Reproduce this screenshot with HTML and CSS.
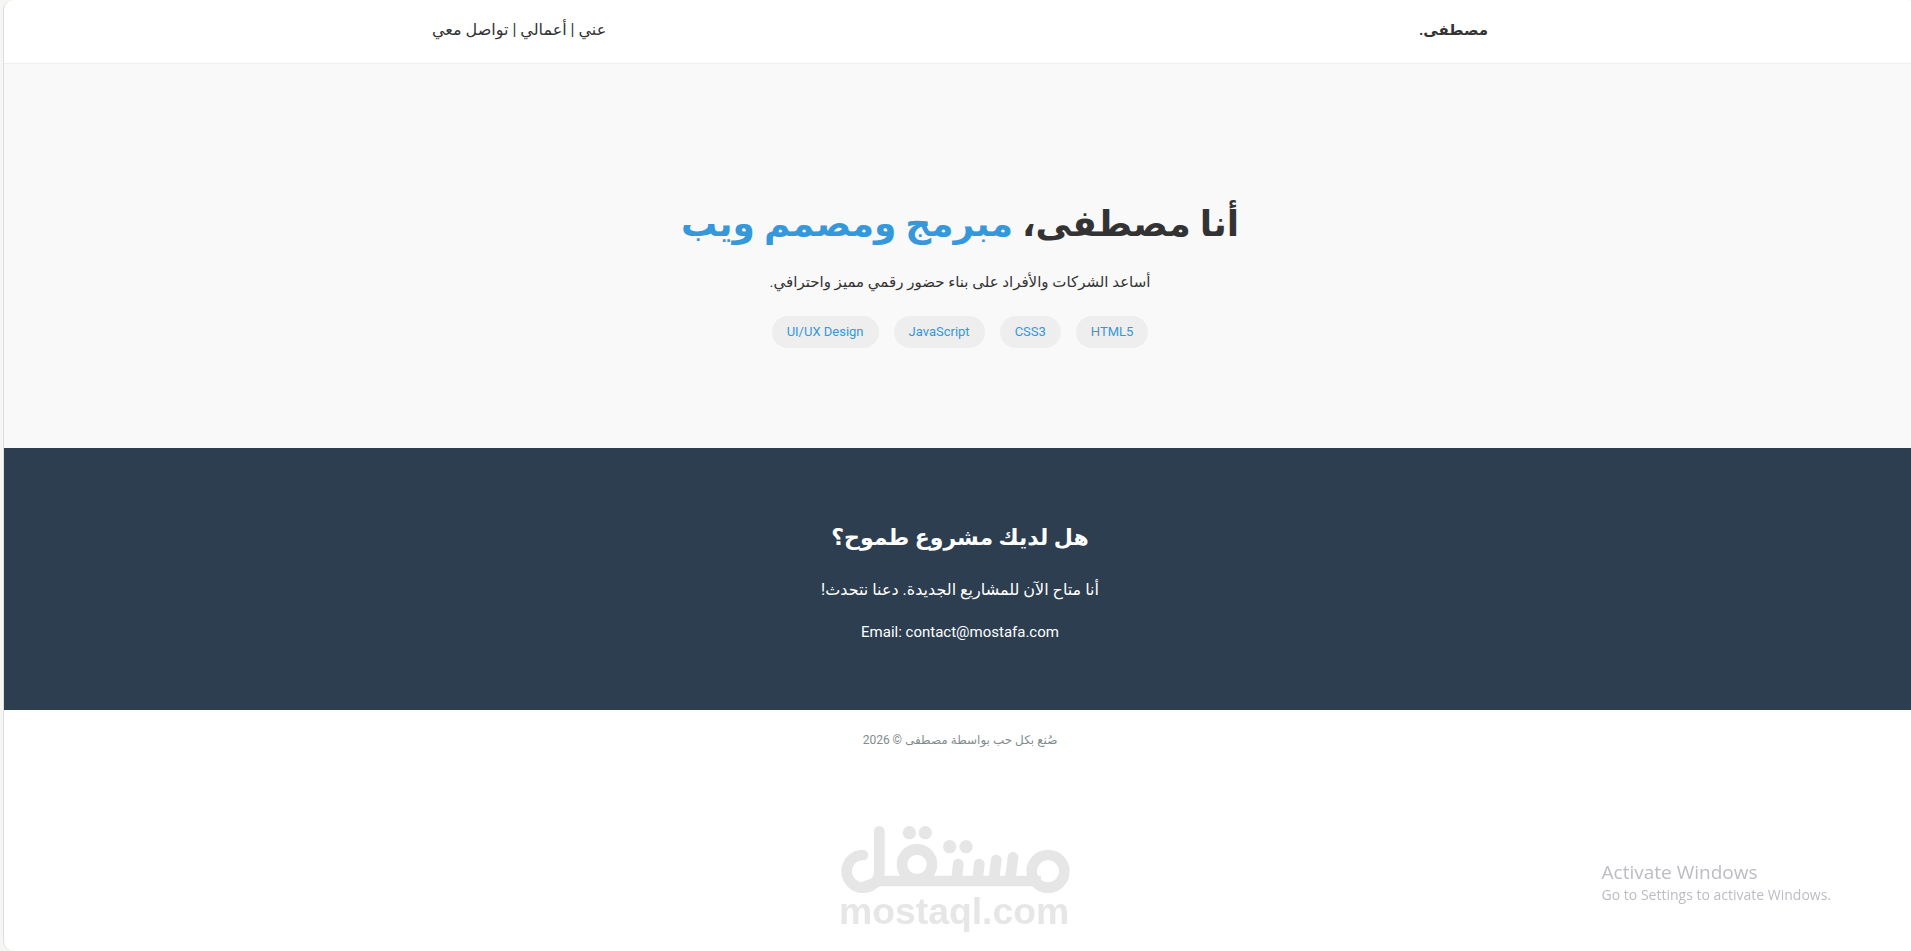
FILE: index.html
```html
<!DOCTYPE html>
<html lang="ar" dir="rtl">
<head>
  <meta charset="UTF-8">
  <meta name="viewport" content="width=device-width, initial-scale=1.0">
  <title>مصطفى | مبرمج ومصمم ويب</title>
  <link rel="stylesheet" href="styles.css">
</head>
<body>
  <div class="page">
    <header class="header">
      <div class="container">
        <div class="logo">مصطفى.</div>
        <nav>عني | أعمالي | تواصل معي</nav>
      </div>
    </header>

    <section class="hero">
      <h1>أنا مصطفى، <span>مبرمج ومصمم ويب</span></h1>
      <p>أساعد الشركات والأفراد على بناء حضور رقمي مميز واحترافي.</p>
      <div class="skills">
        <span class="skill">HTML5</span>
        <span class="skill">CSS3</span>
        <span class="skill">JavaScript</span>
        <span class="skill">UI/UX Design</span>
      </div>
    </section>

    <section class="contact">
      <h2>هل لديك مشروع طموح؟</h2>
      <p>أنا متاح الآن للمشاريع الجديدة. دعنا نتحدث!</p>
      <p class="email" dir="ltr">Email: contact@mostafa.com</p>
    </section>

    <footer class="footer">صُنع بكل حب بواسطة مصطفى © 2026</footer>
  </div>

  <svg class="watermark" viewBox="0 0 690 330" role="img" aria-label="مستقل mostaql.com">
    <g fill="none" stroke="#e6e6e6" stroke-width="32" stroke-linecap="round">
      <path d="M66 87 A49 49 0 1 0 115 136 V16"/>
      <path d="M66 184 L115 165 H600" stroke-linecap="butt"/>
      <circle cx="228" cy="115" r="45"/>
      <circle cx="621" cy="136" r="49"/>
      <path d="M352 114 L347 157 M415 114 L410 157 M466 102 L459 157 M516 94 L508 157"/>
    </g>
    <g fill="#e6e6e6">
      <circle cx="205" cy="20" r="20"/>
      <circle cx="253" cy="20" r="20"/>
      <circle cx="326" cy="62" r="20"/>
      <circle cx="375" cy="62" r="20"/>
      <text x="-6" y="293" direction="ltr">mostaql.com</text>
    </g>
  </svg>

  <div class="activate" dir="ltr">
    <div class="activate-title">Activate Windows</div>
    <div>Go to Settings to activate Windows.</div>
  </div>
</body>
</html>
```

FILE: styles.css
```css
* {
  box-sizing: border-box;
  margin: 0;
  padding: 0;
}

body {
  min-height: 100vh;
  display: flex;
  overflow: hidden;
  background: #f6f6f5;
  color: #333;
  font-family: Roboto, "DejaVu Sans", sans-serif;
  font-size: 16px;
  line-height: 24px;
}

/* the page card runs a little past the window on the right */
.page {
  flex: 1;
  margin: 0 -5px 0 3px;
  border-left: 1px solid #ddd;
  border-radius: 10px;
  background: #fff;
  overflow: hidden;
}

.header {
  padding: 18px 0 21px;
  border-bottom: 1px solid #eee;
}

.container {
  display: flex;
  justify-content: space-between;
  max-width: 1056px;
  margin: 0 auto;
}

.logo {
  font-size: 15px;
  font-weight: bold;
}

.hero {
  padding: 126px 20px 100px;
  background: #f9f9f9;
  text-align: center;
}

.hero h1 {
  margin-bottom: 12px;
  font-size: 36px;
  line-height: 68px;
}

.hero h1 span {
  color: #3498db;
}

.hero p {
  font-size: 15px;
}

.skills {
  display: flex;
  justify-content: center;
  gap: 15px;
  margin-top: 22px;
}

.skill {
  padding: 4px 15px;
  border-radius: 20px;
  background: #eee;
  color: #3498db;
  font-size: 13px;
}

.contact {
  padding: 66px 20px;
  background: #2c3e50;
  color: #fff;
  text-align: center;
}

.contact h2 {
  margin-bottom: 16px;
  font-size: 22px;
  line-height: 48px;
}

.contact .email {
  margin-top: 18px;
  font-size: 15px;
}

.footer {
  padding: 18px 20px;
  color: #7f8c8d;
  font-size: 12px;
  text-align: center;
}

.watermark {
  position: fixed;
  left: 841px;
  bottom: 15px;
  width: 230px;
  height: 110px;
  overflow: visible;
}

.watermark text {
  font-family: "Liberation Sans", Arial, sans-serif;
  font-size: 112px;
  font-weight: bold;
}

.activate {
  position: fixed;
  right: 80px;
  bottom: 45px;
  color: #bcbcc2;
  font-family: "Open Sans", sans-serif;
  font-size: 14px;
  line-height: 22px;
}

.activate-title {
  font-size: 19px;
  line-height: 24px;
}
```
